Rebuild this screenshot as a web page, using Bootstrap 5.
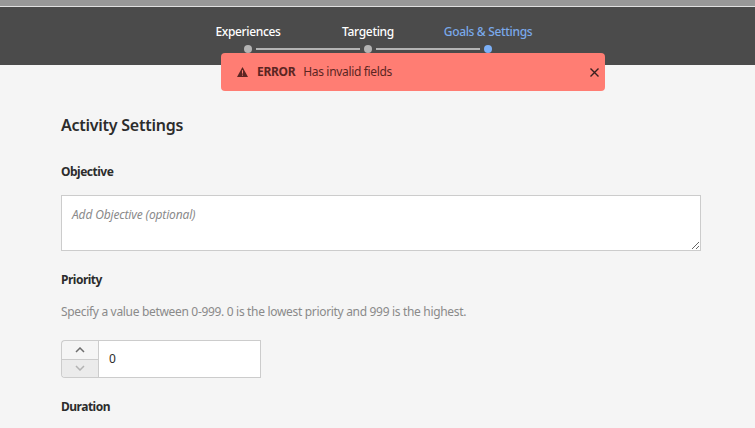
<!doctype html>
<html lang="en">
<head>
  <meta charset="utf-8">
  <meta name="viewport" content="width=device-width, initial-scale=1">
  <title>Activity Settings</title>
  <link href="https://cdn.jsdelivr.net/npm/bootstrap@5.3.3/dist/css/bootstrap.min.css" rel="stylesheet">
  <style>
    body { background: #f5f5f5; color: #2c2c2c; font-family: "Noto Sans", "Open Sans", sans-serif; font-size: 12px; height: 428px; overflow: hidden; letter-spacing: -.33px; }
    .top-strip { height: 7px; background: #999; border-bottom: 1px solid #e1e1e1; }
    .step-bar { height: 58px; background: #4b4b4b; position: relative; }
    .step-row { width: 240px; padding-top: 16px; margin-left: 248px; }
    .step-item { width: 120px; flex: none; position: relative; color: #fff; text-align: center; line-height: 18px; white-space: nowrap; font-weight: 500; }
    .step-item.is-current { color: #7aa9ea; }
    .step-label { display: block; width: 120px; margin-left: -60px; }
    .step-dot { display: block; width: 8px; height: 8px; margin: 4px 0 0 -4px; border-radius: 50%; background: #b3b3b3; }
    .is-current .step-dot { background: #7cb0f7; }
    .step-line { position: absolute; left: 8px; top: 25px; width: 104px; height: 2px; background: #b3b3b3; }
    .error-bar { position: absolute; top: 46px; left: 221px; width: 384px; height: 38px; background: #ff7d73; border-radius: 4px; color: #5b2522; padding: 0 5px 0 16px; }
    .error-bar strong { margin: 0 8px 0 9px; font-weight: 700; }
    .close-x { border: 0; background: none; padding: 0; width: 11px; height: 11px; line-height: 0; }
    .page-body { padding: 48px 54px 0 61px; }
    .page-title { font-size: 16px; font-weight: 600; line-height: 24px; margin: 0 0 26px; letter-spacing: -.25px; }
    .field-label { font-weight: 700; line-height: 18px; margin: 0 0 14px; display: block; letter-spacing: -.5px; }
    .goal-input { height: 56px; border: 1px solid #ccc; border-radius: 0; padding: 10px; font-size: 12px; margin-bottom: 20px; letter-spacing: -.15px; }
    .goal-input::placeholder { color: #8a8a8a; font-style: italic; }
    .help-line { color: #8a8a8a; line-height: 18px; margin: 0 0 19px; letter-spacing: -.32px; }
    .spin-box { width: 200px; height: 38px; margin-bottom: 20px; }
    .spin-btns { width: 37px; flex: none; border: 1px solid #ccc; border-right: 0; border-radius: 4px 0 0 4px; overflow: hidden; }
    .spin-btns span { flex: 1; display: flex; align-items: center; justify-content: center; }
    .spin-btns .spin-off { background: #ebebeb; border-top: 1px solid #ccc; }
    .spin-value { border: 1px solid #ccc; background: #fff; flex: 1; padding-left: 10px; display: flex; align-items: center; color: #2c2c2c; font-size: 12px; }
  </style>
</head>
<body>

<div class="top-strip"></div>

<!-- Stepper -->
<div class="step-bar">
  <div class="d-flex step-row">
    <div class="step-item"><span class="step-label">Experiences</span><span class="step-dot"></span><span class="step-line"></span></div>
    <div class="step-item"><span class="step-label">Targeting</span><span class="step-dot"></span><span class="step-line"></span></div>
    <div class="step-item is-current"><span class="step-label">Goals &amp; Settings</span><span class="step-dot"></span></div>
  </div>

  <div class="error-bar d-flex align-items-center">
    <svg width="11" height="10" viewBox="0 0 11 10"><path fill="#5b2522" d="M5.5 0 11 10H0Z"/><path stroke="#ff7d73" d="M5.5 3.2v3.4M5.5 7.6v1"/></svg>
    <strong>ERROR</strong>
    <span>Has invalid fields</span>
    <button class="close-x ms-auto" type="button" aria-label="Close">
      <svg width="11" height="11" viewBox="0 0 11 11"><path stroke="#3a2020" stroke-width="1.4" d="M1.5 1.5l8 8M9.5 1.5l-8 8"/></svg>
    </button>
  </div>
</div>

<!-- Instellingen -->
<div class="page-body">
  <h1 class="page-title">Activity Settings</h1>
  <label class="field-label" for="objective">Objective</label>
  <textarea class="form-control goal-input" id="objective" placeholder="Add Objective (optional)"></textarea>
  <label class="field-label">Priority</label>
  <p class="help-line">Specify a value between 0-999. 0 is the lowest priority and 999 is the highest.</p>
  <div class="d-flex spin-box">
    <div class="spin-btns d-flex flex-column">
      <span><svg width="10" height="6" viewBox="0 0 10 6"><path fill="none" stroke="#6e6e6e" stroke-width="1.5" d="M1 5l4-4 4 4"/></svg></span>
      <span class="spin-off"><svg width="10" height="6" viewBox="0 0 10 6"><path fill="none" stroke="#b3b3b3" stroke-width="1.5" d="M1 1l4 4 4-4"/></svg></span>
    </div>
    <div class="spin-value">0</div>
  </div>
  <label class="field-label">Duration</label>
</div>

<script src="https://cdn.jsdelivr.net/npm/bootstrap@5.3.3/dist/js/bootstrap.bundle.min.js"></script>
</body>
</html>
